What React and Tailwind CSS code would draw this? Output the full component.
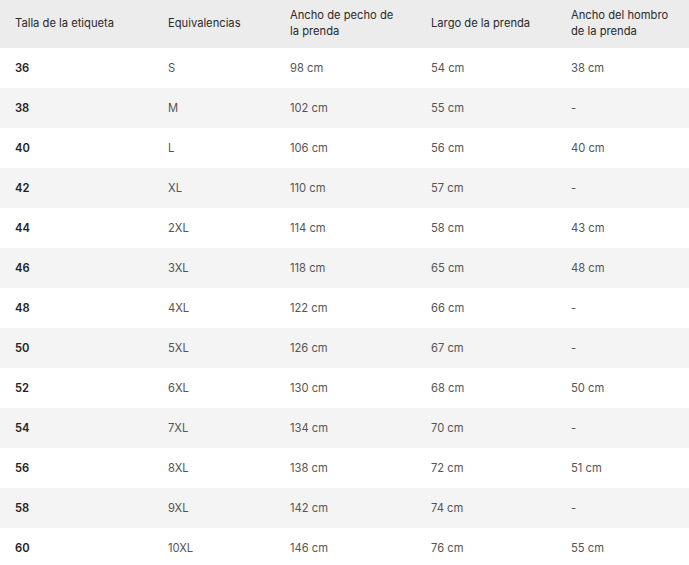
import React from 'react'

const ROWS = [
  ['36', 'S', '98 cm', '54 cm', '38 cm'],
  ['38', 'M', '102 cm', '55 cm', '-'],
  ['40', 'L', '106 cm', '56 cm', '40 cm'],
  ['42', 'XL', '110 cm', '57 cm', '-'],
  ['44', '2XL', '114 cm', '58 cm', '43 cm'],
  ['46', '3XL', '118 cm', '65 cm', '48 cm'],
  ['48', '4XL', '122 cm', '66 cm', '-'],
  ['50', '5XL', '126 cm', '67 cm', '-'],
  ['52', '6XL', '130 cm', '68 cm', '50 cm'],
  ['54', '7XL', '134 cm', '70 cm', '-'],
  ['56', '8XL', '138 cm', '72 cm', '51 cm'],
  ['58', '9XL', '142 cm', '74 cm', '-'],
  ['60', '10XL', '146 cm', '76 cm', '55 cm'],
]

const COLS = 'grid grid-cols-[153px_122px_141px_140px_1fr] pl-[15px]'

export default function App() {
  return (
    <div className="w-[689px] bg-white text-[11.2px] font-['Inter',sans-serif]">
      {/* header */}
      <div className={`${COLS} h-[48px] items-center pb-[3px] bg-[#ececec] text-[#2a2a2a] leading-[16px]`}>
        <div>Talla de la etiqueta</div>
        <div>Equivalencias</div>
        <div>Ancho de pecho de<br />la prenda</div>
        <div>Largo de la prenda</div>
        <div>Ancho del hombro<br />de la prenda</div>
      </div>

      {ROWS.map((r, i) => (
        <div key={r[0]} className={`${COLS} h-[40px] items-center pt-[1px] ${i % 2 ? 'bg-[#f4f4f4]' : 'bg-white'} text-[#555]`}>
          <div className="font-semibold text-[#222]">{r[0]}</div>
          <div>{r[1]}</div>
          <div>{r[2]}</div>
          <div>{r[3]}</div>
          <div>{r[4]}</div>
        </div>
      ))}
    </div>
  )
}
